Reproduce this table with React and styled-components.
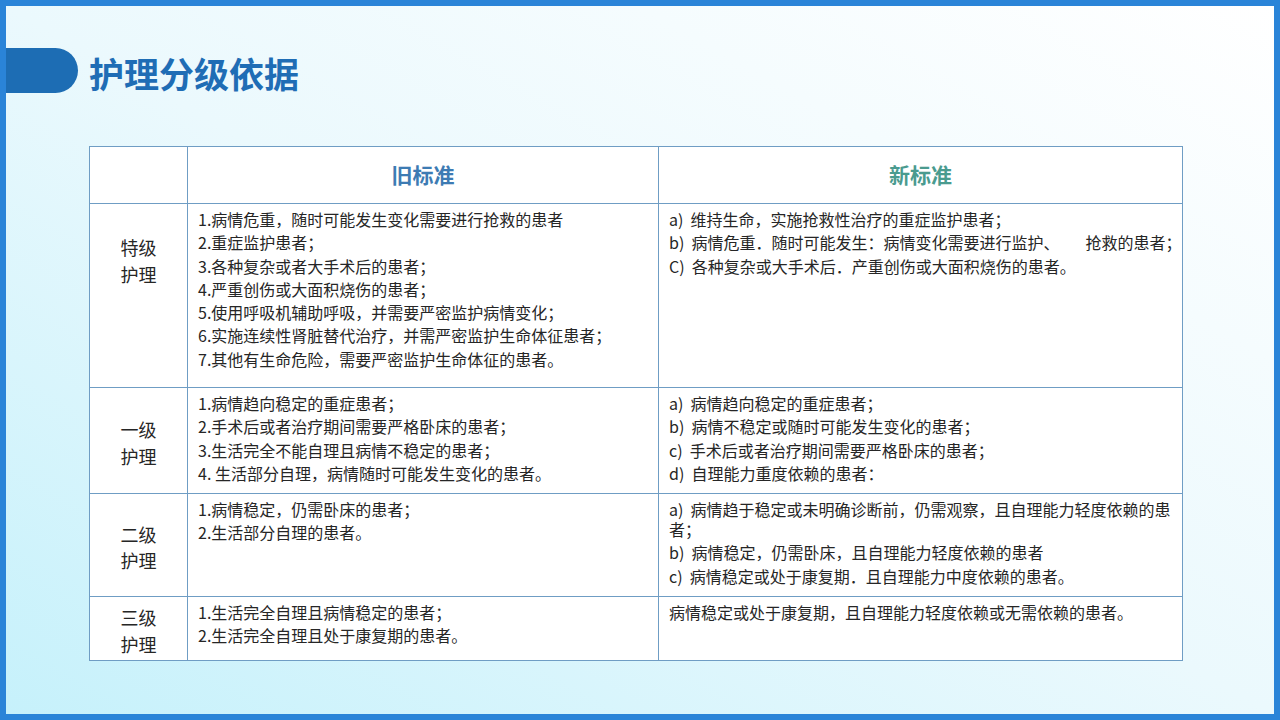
import React from 'react';
import styled, { createGlobalStyle } from 'styled-components';

const GlobalStyle = createGlobalStyle`
  html, body {
    margin: 0;
    padding: 0;
  }
  body {
    font-family: "Noto Sans CJK SC", "Noto Sans", sans-serif;
    color: #262626;
  }
`;

const Slide = styled.div`
  box-sizing: border-box;
  width: 1280px;
  height: 720px;
  border: 6px solid #2a84d8;
  background: linear-gradient(to top right, #c6f1fb 0%, #ebf9fd 50%, #ffffff 100%);
  overflow: hidden;
`;

const Header = styled.div`
  display: flex;
  align-items: center;
  gap: 11px;
  margin-top: 42px;
  height: 45px;
`;

const Pill = styled.div`
  width: 72px;
  height: 45px;
  background: #1d6db4;
  border-radius: 0 23px 23px 0;
`;

const Title = styled.h1`
  margin: 0;
  font-size: 35px;
  font-weight: 700;
  color: #1f6db5;
  line-height: 45px;
  padding-top: 3px;
`;

const Table = styled.table`
  margin: 53px 0 0 83px;
  width: 1093px;
  border-collapse: collapse;
  table-layout: fixed;
  background: #fff;
`;

const Row = styled.tr`
  height: ${p => p.$h}px;
`;

const HeadCell = styled.th`
  border: 1px solid #6f9dc4;
  font-size: 21px;
  font-weight: 700;
  color: ${p => p.$color || '#3d7bb3'};
  text-align: center;
  vertical-align: middle;
  padding: 0 0 3px;
`;

const LabelCell = styled.td`
  border: 1px solid #6f9dc4;
  font-size: 18px;
  line-height: 26.5px;
  text-align: center;
  vertical-align: ${p => (p.$top ? 'top' : 'middle')};
  padding: ${p => (p.$top ? `${p.$top}px 0 0` : '4px 0 0')};
  color: #262626;
`;

const BodyCell = styled.td`
  border: 1px solid #6f9dc4;
  vertical-align: top;
  padding: 5px 10px 0;
  font-size: 16px;
  color: #262626;
`;

const Line = styled.div`
  line-height: 20px;
  margin-bottom: 3.3px;
  white-space: ${p => (p.$nowrap ? 'pre' : 'pre-wrap')};
`;

const Gap = styled.span`
  display: inline-block;
  width: 26px;
`;

const rows = [
  {
    label: ['特级', '护理'],
    h: 184,
    top: 30,
    old: [
      '1.病情危重，随时可能发生变化需要进行抢救的患者',
      '2.重症监护患者；',
      '3.各种复杂或者大手术后的患者；',
      '4.严重创伤或大面积烧伤的患者；',
      '5.使用呼吸机辅助呼吸，并需要严密监护病情变化；',
      '6.实施连续性肾脏替代治疗，并需严密监护生命体征患者；',
      '7.其他有生命危险，需要严密监护生命体征的患者。',
    ],
    neu: [
      'a)  维持生命，实施抢救性治疗的重症监护患者；',
      <>b)  病情危重．随时可能发生：病情变化需要进行监护、<Gap />抢救的患者；</>,
      'C)  各种复杂或大手术后．产重创伤或大面积烧伤的患者。',
    ],
  },
  {
    label: ['一级', '护理'],
    h: 106,
    old: [
      '1.病情趋向稳定的重症患者；',
      '2.手术后或者治疗期间需要严格卧床的患者；',
      '3.生活完全不能自理且病情不稳定的患者；',
      '4. 生活部分自理，病情随时可能发生变化的患者。',
    ],
    neu: [
      'a)  病情趋向稳定的重症患者；',
      'b)  病情不稳定或随时可能发生变化的患者；',
      'c)  手术后或者治疗期间需要严格卧床的患者；',
      'd)  自理能力重度依赖的患者：',
    ],
  },
  {
    label: ['二级', '护理'],
    h: 103,
    old: ['1.病情稳定，仍需卧床的患者；', '2.生活部分自理的患者。'],
    neu: [
      <>a)  病情趋于稳定或未明确诊断前，仍需观察，且自理能力轻度依赖的患<br />者；</>,
      'b)  病情稳定，仍需卧床，且自理能力轻度依赖的患者',
      'c)  病情稳定或处于康复期．且自理能力中度依赖的患者。',
    ],
  },
  {
    label: ['三级', '护理'],
    h: 64,
    old: ['1.生活完全自理且病情稳定的患者；', '2.生活完全自理且处于康复期的患者。'],
    neu: ['病情稳定或处于康复期，且自理能力轻度依赖或无需依赖的患者。'],
  },
];

export default function App() {
  return (
    <>
      <GlobalStyle />
      <Slide>
        <Header>
          <Pill />
          <Title>护理分级依据</Title>
        </Header>
        <Table>
          <colgroup>
            <col style={{ width: 98 }} />
            <col style={{ width: 471 }} />
            <col style={{ width: 524 }} />
          </colgroup>
          <tbody>
            <Row $h={57}>
              <HeadCell />
              <HeadCell>旧标准</HeadCell>
              <HeadCell $color="#4a9b8f">新标准</HeadCell>
            </Row>
            {rows.map((r, i) => (
              <Row key={i} $h={r.h}>
                <LabelCell $top={r.top}>
                  {r.label[0]}
                  <br />
                  {r.label[1]}
                </LabelCell>
                <BodyCell>
                  {r.old.map((t, j) => (
                    <Line key={j}>{t}</Line>
                  ))}
                </BodyCell>
                <BodyCell>
                  {r.neu.map((t, j) => (
                    <Line key={j} $nowrap={i === 0 && j === 1}>{t}</Line>
                  ))}
                </BodyCell>
              </Row>
            ))}
          </tbody>
        </Table>
      </Slide>
    </>
  );
}
